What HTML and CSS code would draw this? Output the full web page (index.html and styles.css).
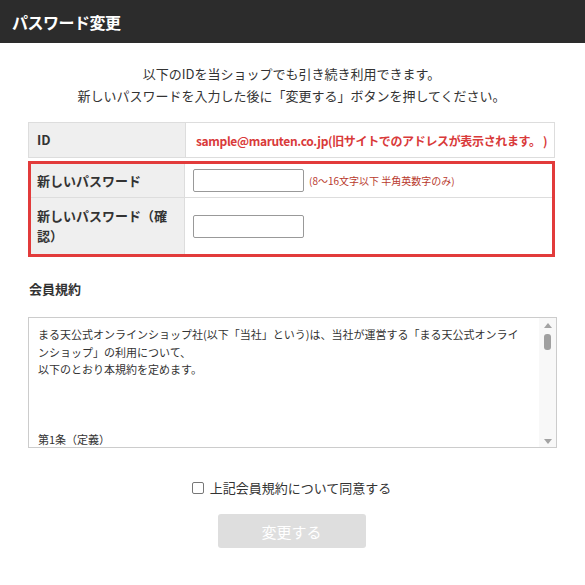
FILE: index.html
```html
<!DOCTYPE html>
<html lang="ja">
<head>
<meta charset="utf-8">
<title>パスワード変更</title>
<link rel="stylesheet" href="styles.css">
</head>
<body>
<header class="topbar"><h1 class="topbar-title">パスワード変更</h1></header>
<main class="content">
  <p class="intro">以下のIDを当ショップでも引き続き利用できます。<br>新しいパスワードを入力した後に「変更する」ボタンを押してください。</p>

  <div class="row row-id">
    <div class="cell-label">ID</div>
    <div class="cell-value id-value">sample@maruten.co.jp(旧サイトでのアドレスが表示されます。 )</div>
  </div>

  <div class="highlight">
    <div class="row row-pw">
      <div class="cell-label">新しいパスワード</div>
      <div class="cell-value"><input class="text-input" type="password"><span class="hint">(8～16文字以下 半角英数字のみ)</span></div>
    </div>
    <div class="row row-pw2">
      <div class="cell-label">新しいパスワード（確認）</div>
      <div class="cell-value"><input class="text-input" type="password"></div>
    </div>
  </div>

  <h2 class="section-title">会員規約</h2>
  <div class="terms">
    <div class="terms-text">
      <p>まる天公式オンラインショップ社(以下「当社」という)は、当社が運営する「まる天公式オンラインショップ」の利用について、</p>
      <p>以下のとおり本規約を定めます。</p>
      <p class="terms-article">第1条（定義）</p>
    </div>
    <div class="scrollbar">
      <span class="arrow arrow-up"></span>
      <span class="thumb"></span>
      <span class="track"></span>
      <span class="arrow arrow-down"></span>
    </div>
  </div>

  <label class="agree"><span class="checkbox"></span>上記会員規約について同意する</label>
  <div class="actions"><button class="submit" type="button">変更する</button></div>
</main>
</body>
</html>
```

FILE: styles.css
```css
* { box-sizing: border-box; }
body {
  margin: 0;
  background: #fff;
  color: #333;
  font-family: "Noto Sans CJK JP", "Noto Sans", sans-serif;
}
.topbar {
  height: 43px;
  background: #2c2c2c;
  padding-left: 12px;
  display: flex;
  align-items: center;
}
.topbar-title {
  margin: 0;
  color: #fff;
  font-size: 16px;
  font-weight: bold;
  letter-spacing: -0.5px;
}
.content {
  padding: 0 30px 0 28px;
}
.intro {
  margin: 20px 0 0;
  text-align: center;
  font-size: 13px;
  line-height: 22px;
  color: #333;
}
.row {
  display: grid;
  grid-template-columns: 157px 1fr;
  width: 527px;
}
.row-id {
  margin-top: 15px;
  border: 1px solid #ddd;
  height: 36px;
}
.cell-label {
  background: #efefef;
  border-right: 1px solid #ddd;
  font-size: 13px;
  font-weight: bold;
  line-height: 20px;
  padding: 0 12px 0 8px;
  display: flex;
  align-items: center;
  color: #333;
}
.cell-value {
  display: flex;
  align-items: center;
  padding-left: 8px;
}
.id-value {
  color: #d93a3a;
  font-weight: bold;
  font-size: 12px;
  padding-left: 10px;
  letter-spacing: -0.35px;
  white-space: pre;
}
.highlight {
  margin-top: 3px;
  width: 527px;
  border: 3px solid #e23b3b;
}
.highlight .row {
  width: auto;
  grid-template-columns: 154px 1fr;
}
.highlight .cell-label {
  padding-left: 6px;
}
.row-pw {
  height: 34px;
  border-bottom: 1px solid #ddd;
}
.row-pw2 {
  height: 56px;
}
.row-pw2 .cell-label { padding-right: 14px; }
.text-input {
  width: 111px;
  height: 23px;
  border: 1px solid #999;
  border-radius: 2px;
  margin: 0;
  padding: 0;
  background: #fff;
}
.hint {
  margin-left: 5px;
  color: #b8382c;
  font-size: 10px;
}
.section-title {
  margin: 22px 0 0 1px;
  font-size: 13px;
  font-weight: bold;
  line-height: 20px;
  color: #333;
}
.terms {
  margin-top: 18px;
  width: 529px;
  height: 131px;
  border: 1px solid #ccc;
  display: flex;
  overflow: hidden;
}
.terms-text {
  flex: 1;
  padding: 8px 11px 0 9px;
  font-size: 11px;
  line-height: 17.5px;
  color: #333;
  overflow: hidden;
}
.terms-text p { margin: 0; }
.terms-article { margin-top: 52px !important; }
.scrollbar {
  width: 17px;
  background: #f8f8f8;
  display: flex;
  flex-direction: column;
  align-items: center;
  padding: 5px 0 3px;
}
.arrow {
  width: 0;
  height: 0;
  border-left: 4px solid transparent;
  border-right: 4px solid transparent;
}
.arrow-up { border-bottom: 5px solid #a3a3a3; }
.arrow-down { border-top: 5px solid #a3a3a3; }
.thumb {
  margin-top: 6px;
  width: 7px;
  height: 16px;
  border-radius: 3px;
  background: #a0a0a0;
}
.track { flex: 1; }
.agree {
  margin-top: 30px;
  display: flex;
  justify-content: center;
  align-items: center;
  font-size: 13px;
  line-height: 20px;
  color: #333;
}
.checkbox {
  width: 12px;
  height: 12px;
  border: 1px solid #777;
  border-radius: 2px;
  margin-right: 6px;
}
.actions {
  margin-top: 16px;
  display: flex;
  justify-content: center;
}
.submit {
  width: 148px;
  height: 34px;
  border: none;
  border-radius: 3px;
  background: #dedede;
  color: #fff;
  font-family: inherit;
  font-size: 15px;
  padding: 0;
}
```
